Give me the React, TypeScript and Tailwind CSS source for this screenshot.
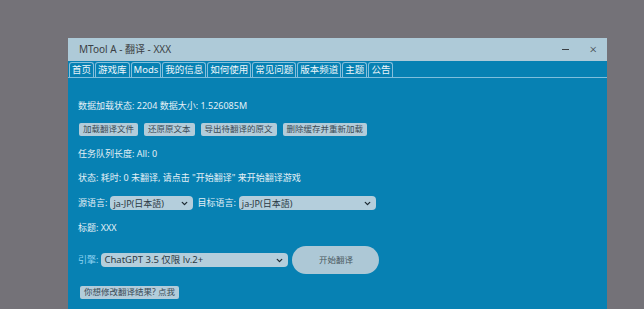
import { ChevronDown } from 'lucide-react';

const tabs = ['首页', '游戏库', 'Mods', '我的信息', '如何使用', '常见问题', '版本频道', '主题', '公告'];
const actions = ['加载翻译文件', '还原原文本', '导出待翻译的原文', '删除缓存并重新加载'];

function FakeSelect({ value, width, size = 'sm' }: { value: string; width: string; size?: 'sm' | 'md' }) {
  return (
    <div
      className={`flex h-[14px] items-center justify-between rounded-[4px] bg-[#b4cedc] pl-[3px] pr-[4px] text-[#2b3a44] ${width} ${
        size === 'md' ? 'text-[9.5px]' : 'text-[9px]'
      }`}
    >
      <span className="leading-none">{value}</span>
      <ChevronDown className="h-[9px] w-[9px] text-[#1d2a33]" strokeWidth={3.5} />
    </div>
  );
}

function SmallButton({ label }: { label: string }) {
  return (
    <button className="flex h-[13px] items-center rounded-[2px] bg-[#b2ccda] px-[4px] text-[8.5px] leading-none text-[#3a4a55]">
      {label}
    </button>
  );
}

export default function App() {
  return (
    <div
      className="h-[309px] w-[644px] overflow-hidden bg-[#747278] pl-[68px] pt-[38px]"
      style={{ fontFamily: '"Noto Sans", "Noto Sans CJK SC", sans-serif' }}
    >
      <div className="flex h-[300px] w-[539px] flex-col bg-[#0781b3]">
        <div className="flex h-[23px] items-center justify-between bg-[#aecad8] pl-[11px] pr-[10px] text-[#3b3f44]">
          <span className="text-[10px]">MTool A - 翻译 - XXX</span>
          <div className="flex items-center gap-[21px]">
            <span className="mb-[1px] block h-[1px] w-[7px] bg-[#3b3f44]" />
            <span className="text-[13px] font-light leading-none">×</span>
          </div>
        </div>
        <div className="flex h-[17px] items-end gap-[1px] border-b border-[#7fbedc] pl-[1px]">
          {tabs.map((t) => (
            <div
              key={t}
              className="flex h-[15px] items-center rounded-t-[3px] border border-b-0 border-[#86bfdc] px-[2px] text-[9.5px] leading-none text-[#eef6fa]"
            >
              {t}
            </div>
          ))}
        </div>
        <div className="flex flex-col gap-[12px] pl-[10px] pt-[22px] text-[9px] leading-[12px] text-[#e4f0f6]">
          <div>数据加载状态: 2204 数据大小: 1.526085M</div>
          <div className="-mt-[1px] flex gap-[6px] pl-[1px]">
            {actions.map((a) => (
              <SmallButton key={a} label={a} />
            ))}
          </div>
          <div>任务队列长度: All: 0</div>
          <div>状态: 耗时: 0 未翻译, 请点击 "开始翻译" 来开始翻译游戏</div>
          <div className="flex items-center gap-[3px]">
            <span>源语言:</span>
            <FakeSelect value="ja-JP(日本語)" width="w-[83px]" />
            <span className="ml-[1px]">目标语言:</span>
            <FakeSelect value="ja-JP(日本語)" width="w-[137px]" />
          </div>
          <div>标题: XXX</div>
          <div className="flex items-center gap-[3px]">
            <span className="text-[#8fd3f2]">引擎:</span>
            <FakeSelect value="ChatGPT 3.5 仅限 lv.2+" width="w-[187px]" size="md" />
            <button className="ml-[1px] h-[28px] w-[87px] rounded-full bg-[#adc8d6] text-[8.5px] text-[#4a5961]">
              开始翻译
            </button>
          </div>
          <div className="pl-[2px]">
            <SmallButton label="你想修改翻译结果? 点我" />
          </div>
        </div>
      </div>
    </div>
  );
}
